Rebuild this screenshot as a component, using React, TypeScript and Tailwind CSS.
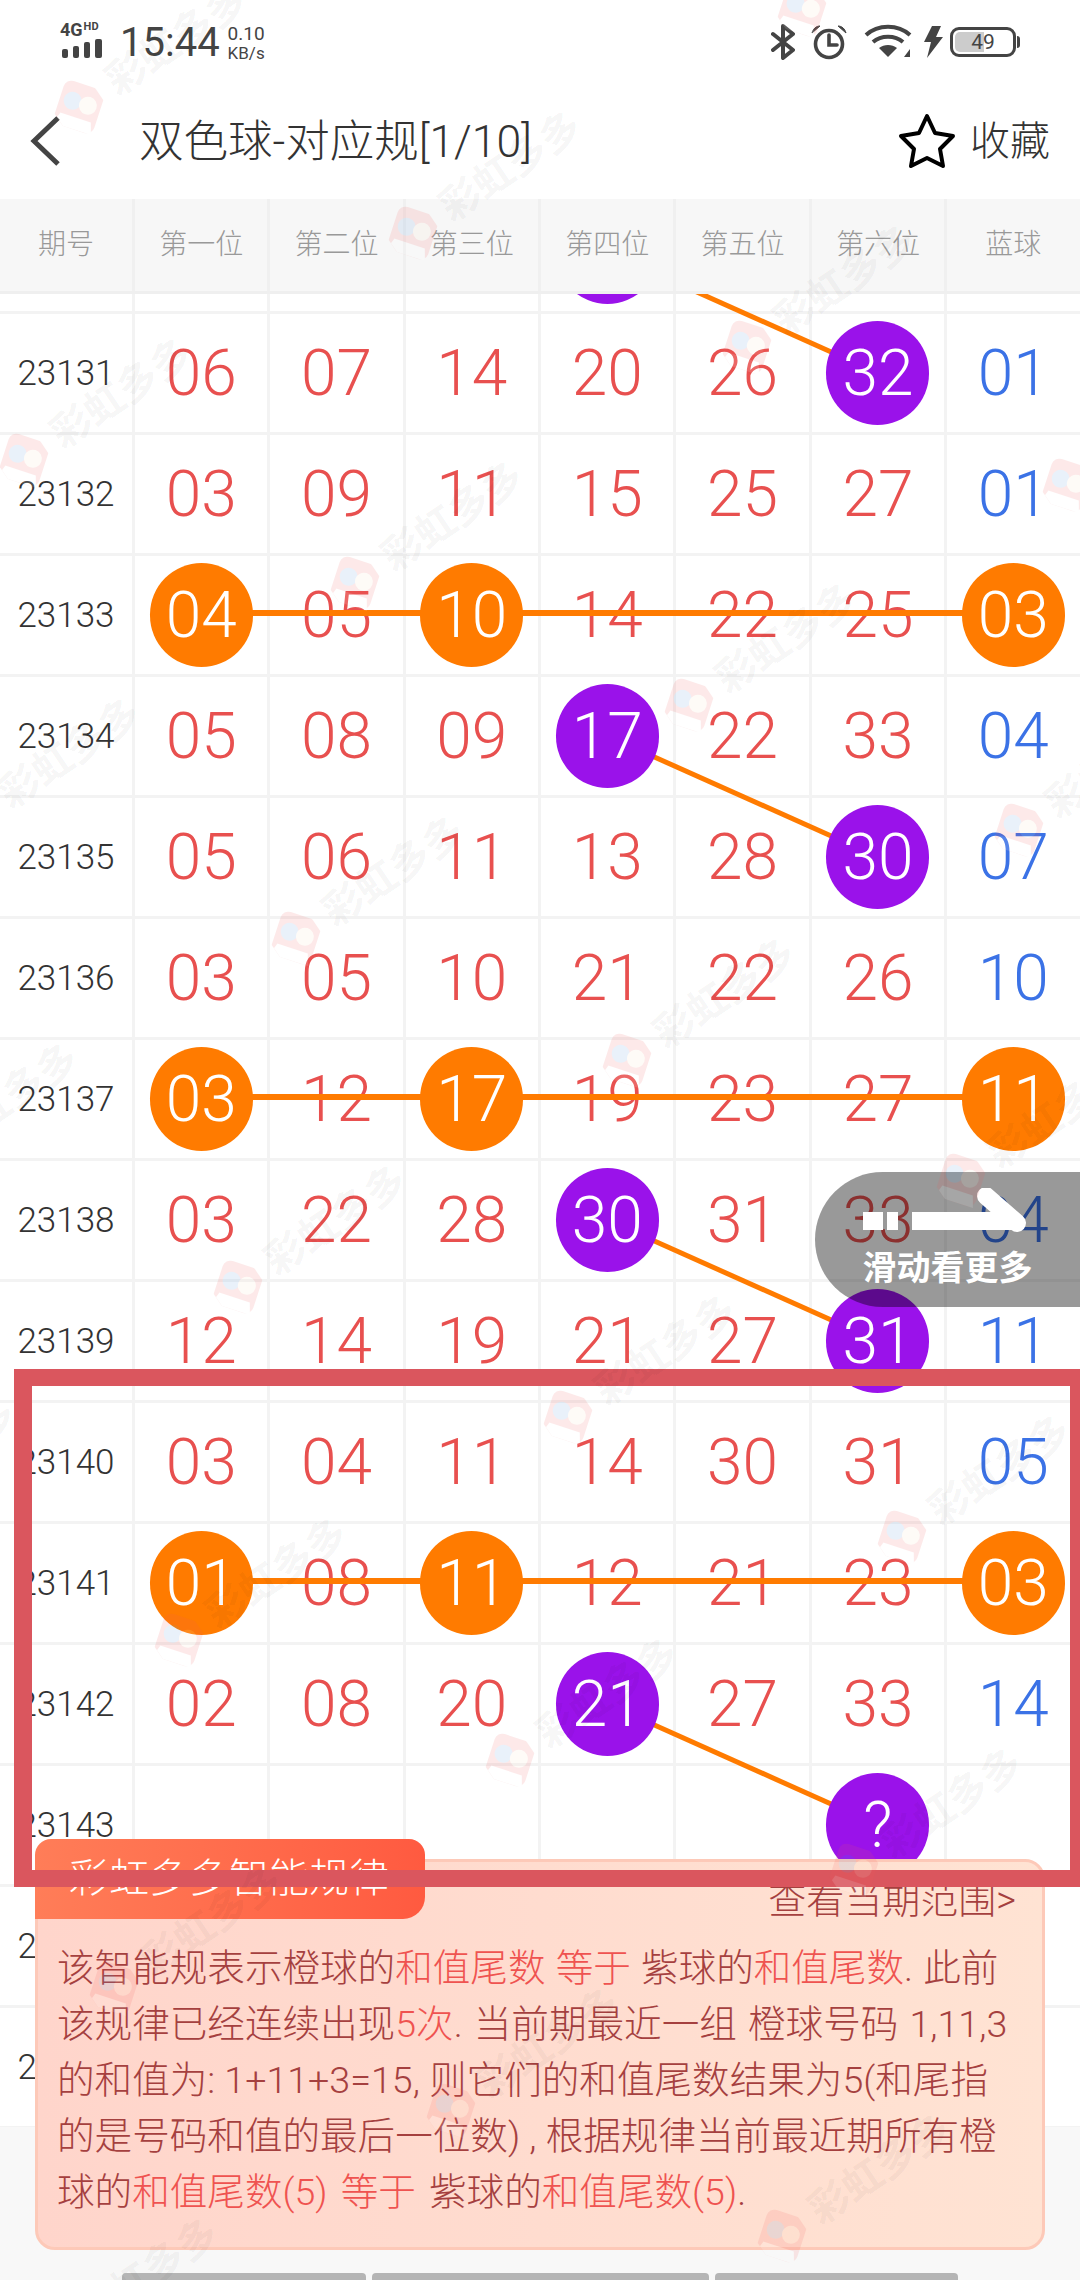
const FONT = '[font-family:Roboto,"Noto_Sans_CJK_SC",sans-serif]'
const ROW_H = 121

type Ball = { col: number; color: 'orange' | 'purple' }

interface Row {
  id: string
  nums: string[]
  balls?: Ball[]
}

const orange = (...cols: number[]): Ball[] => cols.map((col) => ({ col, color: 'orange' }))
const purple = (col: number): Ball[] => [{ col, color: 'purple' }]

const rows: Row[] = [
  { id: '', nums: ['', '', '', '', '', '', ''], balls: purple(4) },
  { id: '23131', nums: ['06', '07', '14', '20', '26', '32', '01'], balls: purple(6) },
  { id: '23132', nums: ['03', '09', '11', '15', '25', '27', '01'] },
  { id: '23133', nums: ['04', '05', '10', '14', '22', '25', '03'], balls: orange(1, 3, 7) },
  { id: '23134', nums: ['05', '08', '09', '17', '22', '33', '04'], balls: purple(4) },
  { id: '23135', nums: ['05', '06', '11', '13', '28', '30', '07'], balls: purple(6) },
  { id: '23136', nums: ['03', '05', '10', '21', '22', '26', '10'] },
  { id: '23137', nums: ['03', '12', '17', '19', '23', '27', '11'], balls: orange(1, 3, 7) },
  { id: '23138', nums: ['03', '22', '28', '30', '31', '33', '04'], balls: purple(4) },
  { id: '23139', nums: ['12', '14', '19', '21', '27', '31', '11'], balls: purple(6) },
  { id: '23140', nums: ['03', '04', '11', '14', '30', '31', '05'] },
  { id: '23141', nums: ['01', '08', '11', '12', '21', '23', '03'], balls: orange(1, 3, 7) },
  { id: '23142', nums: ['02', '08', '20', '21', '27', '33', '14'], balls: purple(4) },
  { id: '23143', nums: ['', '', '', '', '', '?', ''], balls: purple(6) },
  { id: '23144', nums: ['', '', '', '', '', '', ''] },
  { id: '23145', nums: ['', '', '', '', '', '', ''] },
]

const headers = ['期号', '第一位', '第二位', '第三位', '第四位', '第五位', '第六位', '蓝球']

const cx = (col: number) => 66 + col * 135.35
const cy = (row: number) => row * ROW_H + 59

// connecting lines drawn between ball centres
const links: [number, number, number, number][] = [
  [4, 0, 6, 1],
  [1, 3, 7, 3],
  [4, 4, 6, 5],
  [1, 7, 7, 7],
  [4, 8, 6, 9],
  [1, 11, 7, 11],
  [4, 12, 6, 13],
]

const watermarks = [
  [802, 10], [79, 107], [413, 233], [747, 347], [1067, 485],
  [24, 460], [355, 583], [689, 705], [1019, 830],
  [-28, 820], [296, 938], [627, 1060], [961, 1180],
  [-90, 1165], [238, 1287], [568, 1417], [902, 1537],
  [-153, 1520], [179, 1640], [510, 1760], [854, 1870],
  [114, 1988], [451, 2110], [782, 2236], [50, 2340],
]

function Watermark({ x, y }: { x: number; y: number }) {
  return (
    <div
      className="absolute flex h-12 origin-[24px_24px] rotate-[-34deg] items-center gap-[14px] whitespace-nowrap"
      style={{ left: x - 24, top: y - 24 }}
    >
      <svg width="48" height="62" viewBox="0 0 48 62" className="shrink-0 opacity-[0.13]">
        <g transform="rotate(52 24 31)">
          <rect x="3" y="8" width="42" height="46" rx="8" fill="#f25b5b" />
          <circle cx="16" cy="27" r="9" fill="#5c9be0" />
          <circle cx="32" cy="27" r="9" fill="#fbe3c8" />
          <path d="M8 42h32l4 12H4z" fill="#ffffff" />
        </g>
      </svg>
      <span className="text-[40px] font-bold leading-none text-[rgba(0,0,0,0.055)]">彩虹多多</span>
    </div>
  )
}

function Cell({ value, ball, blue }: { value: string; ball?: Ball; blue: boolean }) {
  return (
    <div className="relative flex h-full w-[135.35px] items-center justify-center border-l-[3px] border-[#f3f3f3]">
      {ball ? (
        <div
          className={`relative z-20 flex h-[104px] w-[103px] shrink-0 items-center justify-center rounded-full pt-[2px] text-[64px] font-light leading-none text-white ${
            ball.color === 'orange' ? 'bg-[#ff7b00]' : 'bg-[#9a12ea]'
          }`}
        >
          {value}
        </div>
      ) : (
        <span className={`pt-[2px] text-[64px] font-light leading-none ${blue ? 'text-[#3b72e6]' : 'text-[#e8504f]'}`}>{value}</span>
      )}
    </div>
  )
}

function StatusBar() {
  return (
    <div className="flex h-20 items-start text-[#444444]">
      <div className="ml-[60px] mt-[21px] flex w-[46px] flex-col">
        <div className="flex items-start leading-none">
          <span className="text-[18px] font-bold leading-[18px]">4G</span>
          <span className="ml-[1px] text-[11px] font-bold leading-[12px]">HD</span>
        </div>
        <svg width="44" height="20" viewBox="0 0 44 20" className="mt-[-1px]">
          <rect x="2" y="11" width="6" height="9" rx="2" fill="#444" />
          <rect x="13" y="8" width="6" height="12" rx="2" fill="#444" />
          <rect x="24" y="4" width="6" height="16" rx="2" fill="#444" />
          <rect x="35" y="1" width="7" height="19" rx="2" fill="#444" />
        </svg>
      </div>
      <span className="ml-[14px] mt-[22px] text-[40px] leading-[42px]">15:44</span>
      <div className="ml-[8px] mt-[24px] flex flex-col">
        <span className="text-[19px] leading-[20px]">0.10</span>
        <span className="text-[17px] leading-[18px]">KB/s</span>
      </div>
      <div className="ml-auto mr-[64px] mt-[24px] flex items-start">
        <svg width="24" height="36" viewBox="0 0 24 36" fill="none" stroke="#444" strokeWidth="4" strokeLinecap="round" strokeLinejoin="round">
          <path d="M2 10l20 16-10 8V2l10 8L2 26" />
        </svg>
        <svg width="36" height="36" viewBox="0 0 36 36" fill="none" stroke="#444" strokeWidth="3.6" className="ml-[16px]">
          <circle cx="18" cy="20" r="13.5" />
          <path d="M18 11v10h8" strokeLinecap="round" />
          <path d="M1 9c1-4 4-7 8-7zM35 9c-1-4-4-7-8-7z" fill="#444" strokeWidth="1" />
        </svg>
        <svg width="48" height="34" viewBox="0 0 48 34" fill="none" stroke="#444" strokeWidth="4" className="ml-[17px]">
          <path d="M2 11c12-11 32-11 44 0" />
          <path d="M9 18c8-7 22-7 30 0" />
          <path d="M24 33l-9-9c5-4 13-4 18 0z" fill="#444" stroke="none" />
          <path d="M40 33l6-8v8z" fill="#444" stroke="none" />
        </svg>
        <svg width="20" height="32" viewBox="0 0 20 32" className="ml-[11px] mt-[2px]">
          <path d="M9 0h9l-5 11h7L4 32l4-16H1z" fill="#444" />
        </svg>
        <div className="relative ml-[7px] mt-[3px] flex h-[30px] w-[66px] items-center justify-center rounded-[9px] border-[3px] border-[#444444]">
          <div className="absolute inset-y-[2px] left-[2px] w-[29px] rounded-l-[5px] bg-[#cccccc]" />
          <span className="relative text-[21px] leading-none">49</span>
          <div className="absolute right-[-7px] top-[6px] h-[12px] w-[3px] rounded-r-full bg-[#444444]" />
        </div>
      </div>
    </div>
  )
}

function NavBar() {
  return (
    <div className="flex h-[119px] items-start">
      <svg width="32" height="52" viewBox="0 0 32 52" fill="none" stroke="#444" strokeWidth="5" className="ml-[30px] mt-[35px]">
        <path d="M28 3L4 26l24 23" />
      </svg>
      <h1 className="ml-[77px] mt-[36px] whitespace-nowrap text-[44.5px] font-light leading-[52px] text-[#333333]">双色球-对应规[1/10]</h1>
      <svg width="58" height="56" viewBox="0 0 58 56" fill="none" stroke="#000" strokeWidth="4" strokeLinejoin="round" className="ml-auto mt-[33px]">
        <path d="M29 3l8 17 18 3-13 13 3 17-16-8-16 8 3-17L3 23l18-3z" />
      </svg>
      <span className="ml-[14px] mr-[30px] mt-[36px] text-[40px] font-light leading-[52px] text-[#333333]">收藏</span>
    </div>
  )
}

function Table() {
  return (
    <div className="relative min-h-0 flex-1 overflow-hidden">
      <div className="relative mt-[-101px]">
        {rows.map((row) => (
          <div key={row.id || 'top'} className="flex h-[121px] border-b-[3px] border-[#f3f3f3]">
            <div className="flex w-[132px] items-center justify-center text-[35px] font-light leading-none text-[#333333]">{row.id}</div>
            {row.nums.map((n, i) => (
              <Cell key={i} value={n} blue={i === 6} ball={row.balls?.find((b) => b.col === i + 1)} />
            ))}
          </div>
        ))}
        <svg className="absolute left-0 top-0 z-10" width="1080" height="1900" fill="none" stroke="#ff7b00">
          {links.map(([c1, r1, c2, r2], i) => (
            <line
              key={i}
              x1={cx(c1)}
              y1={cy(r1) - (r1 === r2 ? 2 : 0)}
              x2={cx(c2)}
              y2={cy(r2) - (r1 === r2 ? 2 : 0)}
              strokeWidth={r1 === r2 ? 6 : 5}
            />
          ))}
        </svg>
      </div>
    </div>
  )
}

function SwipeHint() {
  return (
    <div className="absolute left-[815px] top-[1172px] z-30 flex h-[135px] w-[265px] flex-col items-center justify-end rounded-l-full bg-[rgba(0,0,0,0.4)] pb-[17px]">
      <svg width="170" height="50" viewBox="0 0 170 50" fill="none" stroke="#fff" strokeWidth="18" className="absolute left-[46px] top-[16px]">
        <path d="M2 33h20M26 33h11M51 33h104" />
        <path d="M125 8l31 27" strokeLinecap="round" />
      </svg>
      <span className="text-[34px] font-bold leading-[44px] text-white">滑动看更多</span>
    </div>
  )
}

const hi = 'text-[#ef5350]'

function RulePanel() {
  return (
    <div className="absolute left-[35px] top-[1859px] z-40 h-[391px] w-[1010px] rounded-[20px] border-[3px] border-[#fdc9b8] bg-gradient-to-r from-[#ffd5cb] to-[#ffe3d3]">
      <div className="absolute left-[-3px] top-[-23px] flex h-[80px] w-[390px] items-center rounded-tl-[16px] rounded-tr-[16px] rounded-br-[22px] bg-gradient-to-r from-[#ff7d58] to-[#ff5a40] pl-[34px] text-[40px] font-light leading-none text-white">
        彩虹多多智能规律
      </div>
      <div className="mr-[26px] mt-[13px] text-right text-[38px] font-light leading-[50px] text-[#a5403f]">查看当期范围&gt;</div>
      <div className="ml-[19px] mt-[15px] whitespace-nowrap text-[37.6px] font-light leading-[56px] text-[#a5403f]">
        <p className="[word-spacing:1px]">
          该智能规表示橙球的<span className={hi}>和值尾数 等于</span> 紫球的<span className={hi}>和值尾数</span>. 此前
        </p>
        <p className="[word-spacing:2px]">
          该规律已经连续出现<span className={hi}>5次</span>. 当前期最近一组 橙球号码 1,11,3
        </p>
        <p>的和值为: 1+11+3=15, 则它们的和值尾数结果为5(和尾指</p>
        <p>的是号码和值的最后一位数) , 根据规律当前最近期所有橙</p>
        <p className="[word-spacing:4px]">
          球的<span className={hi}>和值尾数(5) 等于</span> 紫球的<span className={hi}>和值尾数</span>
          <span className={hi}>(5)</span>.
        </p>
      </div>
    </div>
  )
}

export default function App() {
  return (
    <div className={`relative flex h-[2280px] w-[1080px] flex-col overflow-hidden bg-white ${FONT}`}>
      <StatusBar />
      <NavBar />

      <div className="flex h-[95px] shrink-0 border-b-[3px] border-[#efefef] bg-[#f7f7f7]">
        {headers.map((h, i) => (
          <div
            key={h}
            className={`flex items-center justify-center text-[28px] font-light text-[#999999] ${
              i > 0 ? 'w-[135.35px] border-l-[3px] border-[#f0f0f0]' : 'w-[132px]'
            }`}
          >
            {h}
          </div>
        ))}
      </div>

      <Table />

      <div className="flex h-[153px] shrink-0 items-end justify-center gap-[6px] bg-[#f8f8f8]">
        <div className="h-[7px] w-[244px] rounded-t-[4px] bg-[#b5b5b5]" />
        <div className="h-[7px] w-[337px] rounded-t-[4px] bg-[#b5b5b5]" />
        <div className="h-[7px] w-[243px] rounded-t-[4px] bg-[#b5b5b5]" />
      </div>

      <SwipeHint />
      <RulePanel />

      {/* annotation box from the screenshot */}
      <div className="absolute left-[14px] top-[1369px] z-50 h-[518px] w-[1066px] border-y-[17px] border-l-[18px] border-r-[10px] border-[#da565e]" />

      <div className="pointer-events-none absolute inset-0 z-[60] overflow-hidden">
        {watermarks.map(([x, y]) => (
          <Watermark key={`${x}-${y}`} x={x} y={y} />
        ))}
      </div>
    </div>
  )
}
